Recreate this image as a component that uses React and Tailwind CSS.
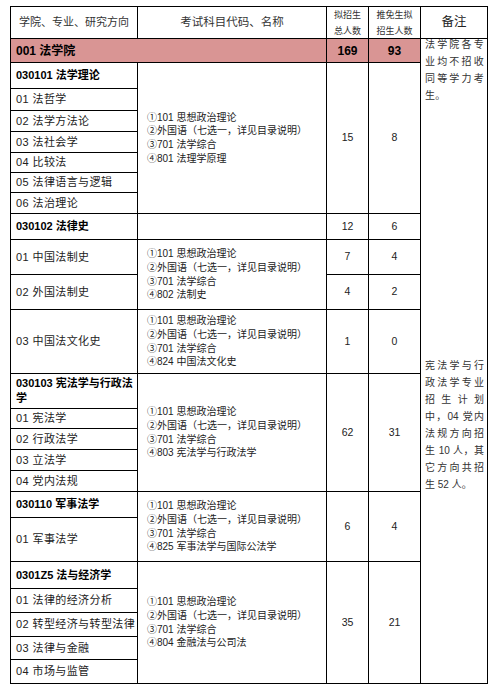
import React from "react";

const courses = (last) => [
  "①101 思想政治理论",
  "②外国语（七选一，详见目录说明）",
  "③701 法学综合",
  last,
];

function Dir({ children }) {
  return (
    <div className="bg-white flex items-center pl-[5px] text-[11px] tracking-[0.4px] text-[#222]">
      {children}
    </div>
  );
}

function Head({ children }) {
  return (
    <div className="bg-white flex items-center pl-[5px] text-[11px] font-bold text-black leading-[15px]">
      {children}
    </div>
  );
}

function Course({ span, last }) {
  return (
    <div className={`bg-white flex flex-col justify-center pl-[9px] text-[10px] leading-[13.7px] text-[#222] ${span}`}>
      {courses(last).map((c) => (
        <div key={c}>{c}</div>
      ))}
    </div>
  );
}

function Num({ children, span = "" }) {
  return (
    <div className={`bg-white flex items-center justify-center text-[10.5px] text-[#222] ${span}`}>
      {children}
    </div>
  );
}

export default function App() {
  return (
    <div className="min-h-screen bg-white pt-[6px] pl-[10px] font-['Liberation_Sans','Noto_Sans_CJK_SC',sans-serif]">
      <div className="grid w-fit bg-black gap-px p-px grid-cols-[126px_188px_41px_51px_66px] grid-rows-[31px_23px_25px_21px_20px_20px_19px_19px_20px_25px_34px_34px_63px_34px_19px_20px_20px_20px_25px_43px_26px_23px_23px_22px_23px]">
        {/* header */}
        <div className="bg-white flex items-center justify-center text-[11px] text-[#333]">学院、专业、研究方向</div>
        <div className="bg-white flex items-center justify-center text-[11.5px] text-[#333]">考试科目代码、名称</div>
        <div className="bg-white flex flex-col items-center justify-center text-[9px] leading-[16px] text-[#333]">
          <span>拟招生</span>
          <span>总人数</span>
        </div>
        <div className="bg-white flex flex-col items-center justify-center text-[9px] leading-[16px] text-[#333]">
          <span>推免生拟</span>
          <span>招生人数</span>
        </div>
        <div className="bg-white flex items-center justify-center text-[12.5px] text-[#222]">备注</div>

        {/* 001 */}
        <div className="col-span-2 bg-[#d99594] flex items-center pl-[5px] text-[12px] font-bold text-black">001 法学院</div>
        <div className="bg-[#d99594] flex items-center justify-center text-[12px] font-bold text-black">169</div>
        <div className="bg-[#d99594] flex items-center justify-center text-[12px] font-bold text-black">93</div>
        <div className="row-span-24 bg-white flex flex-col pl-[4px] pr-[3px] text-[10px] leading-[17px] text-[#333]">
          <p className="text-justify -mt-[3px] tracking-[0.3px]">法学院各专业均不招收同等学力考生。</p>
          <p className="text-justify mt-[253px]">宪法学与行政法学专业招生计划中，04 党内法规方向招生 10 人，其它方向共招生 52 人。</p>
        </div>

        {/* 030101 */}
        <Head>030101 法学理论</Head>
        <Course span="row-span-7" last="④801 法理学原理" />
        <Num span="row-span-7">15</Num>
        <Num span="row-span-7">8</Num>
        <Dir>01 法哲学</Dir>
        <Dir>02 法学方法论</Dir>
        <Dir>03 法社会学</Dir>
        <Dir>04 比较法</Dir>
        <Dir>05 法律语言与逻辑</Dir>
        <Dir>06 法治理论</Dir>

        {/* 030102 */}
        <Head>030102 法律史</Head>
        <div className="bg-white" />
        <Num>12</Num>
        <Num>6</Num>
        <Dir>01 中国法制史</Dir>
        <Course span="row-span-2" last="④802 法制史" />
        <Num>7</Num>
        <Num>4</Num>
        <Dir>02 外国法制史</Dir>
        <Num>4</Num>
        <Num>2</Num>
        <Dir>03 中国法文化史</Dir>
        <Course span="" last="④824 中国法文化史" />
        <Num>1</Num>
        <Num>0</Num>

        {/* 030103 */}
        <Head>
          030103 宪法学与行政法
          <br />
          学
        </Head>
        <Course span="row-span-5" last="④803 宪法学与行政法学" />
        <Num span="row-span-5">62</Num>
        <Num span="row-span-5">31</Num>
        <Dir>01 宪法学</Dir>
        <Dir>02 行政法学</Dir>
        <Dir>03 立法学</Dir>
        <Dir>04 党内法规</Dir>

        {/* 030110 */}
        <Head>030110 军事法学</Head>
        <Course span="row-span-2" last="④825 军事法学与国际公法学" />
        <Num span="row-span-2">6</Num>
        <Num span="row-span-2">4</Num>
        <Dir>01 军事法学</Dir>

        {/* 0301Z5 */}
        <Head>0301Z5 法与经济学</Head>
        <Course span="row-span-5" last="④804 金融法与公司法" />
        <Num span="row-span-5">35</Num>
        <Num span="row-span-5">21</Num>
        <Dir>01 法律的经济分析</Dir>
        <Dir>02 转型经济与转型法律</Dir>
        <Dir>03 法律与金融</Dir>
        <Dir>04 市场与监管</Dir>
      </div>
    </div>
  );
}
